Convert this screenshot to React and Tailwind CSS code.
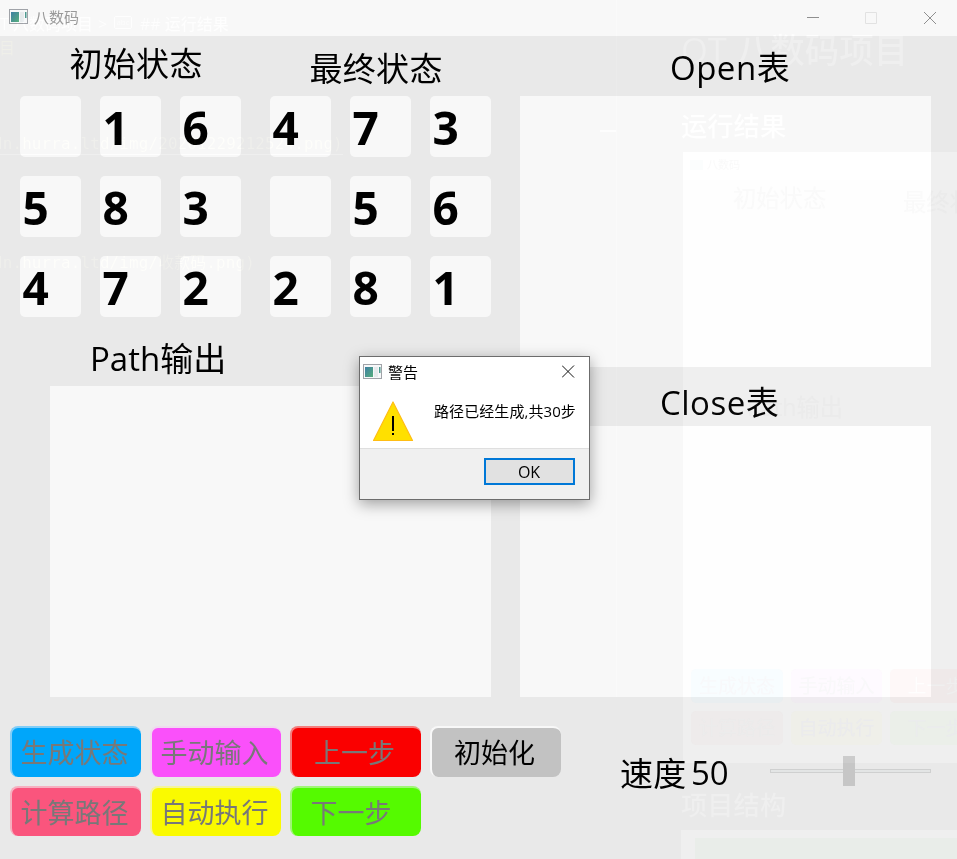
import React from "react";

const START = ["", "1", "6", "5", "8", "3", "4", "7", "2"];
const GOAL = ["4", "7", "3", "", "5", "6", "2", "8", "1"];

function AppIcon() {
  return (
    <svg className="block h-4 w-5 shrink-0" viewBox="0 0 20 16">
      <defs>
        <linearGradient id="screen" x1="0" y1="0" x2="1" y2="1">
          <stop offset="0" stopColor="#3e7fa3" />
          <stop offset="1" stopColor="#56ad7c" />
        </linearGradient>
      </defs>
      <rect x="0.5" y="0.5" width="18" height="14" fill="#f7f8f9" stroke="#a0a3a8" />
      <rect x="2" y="3" width="8" height="10" fill="url(#screen)" />
      <rect x="11" y="3" width="4" height="10" fill="#e6eaec" />
      <rect x="16" y="3" width="1.5" height="6" fill="#4f9a90" />
    </svg>
  );
}

function Board({ cells }) {
  return (
    <div className="grid w-[221px] grid-cols-3 gap-[19px]">
      {cells.map((n, i) => (
        <div key={i} className="flex h-[61px] items-center rounded-[5px] bg-[#f8f8f8] pt-[2px] pl-[2.5px] text-[46px] leading-[61px] font-bold">
          {n}
        </div>
      ))}
    </div>
  );
}

function Heading({ children, className }) {
  return <div className={"h-10 text-[33px] leading-10 whitespace-nowrap " + className}>{children}</div>;
}

function ActionButton({ children, className }) {
  return (
    <button className={"rounded-[8px] border-t-2 border-l-2 pr-1 text-[27px] leading-none whitespace-nowrap " + className}>
      {children}
    </button>
  );
}

function Ghost({ children, className }) {
  return <div className={"absolute whitespace-nowrap " + className}>{children}</div>;
}

/* Faint content of the window behind, showing through the translucent frame. */
function Backdrop() {
  return (
    <div className="pointer-events-none absolute inset-0 overflow-hidden text-[#060606] mix-blend-plus-lighter">
      <Ghost className="top-[12px] left-0 text-[16px] leading-6 font-medium">T 八数码项目</Ghost>
      <Ghost className="top-[12px] left-[98px] text-[16px] leading-6">&gt;</Ghost>
      <Ghost className="top-[16px] left-[114px] h-[13px] w-[18px] rounded-[2px] border border-[#060606] text-center text-[8px] leading-[10px]">abc</Ghost>
      <Ghost className="top-[12px] left-[140px] text-[16px] leading-6 font-medium">## 运行结果</Ghost>
      <Ghost className="top-[36px] left-[-1px] text-[16px] leading-6 text-[#060600]">目</Ghost>
      <Ghost className="top-[133px] left-[-7px] h-[22px] border-b border-[#060606] font-['DejaVu_Sans_Mono','Noto_Sans_CJK_SC',monospace] text-[15.9px] leading-[22px] tracking-[0.15px] text-[#060603]">dn.hurra.ltd/img/20201229212524.png)</Ghost>
      <Ghost className="top-[252px] left-[-7px] font-['DejaVu_Sans_Mono','Noto_Sans_CJK_SC',monospace] text-[15.9px] leading-[22px] tracking-[0.15px] text-[#060603]">dn.hurra.ltd/img/收款码.png)</Ghost>

      <div className="absolute top-0 left-[616px] h-[697px] w-px bg-[#020202]" />
      <div className="absolute top-[130px] left-[600px] h-[2px] w-4 bg-[#050505]" />
      <Ghost className="top-[28px] left-[681px] text-[34.5px] leading-[44px] font-medium">QT 八数码项目</Ghost>
      <Ghost className="top-[110px] left-[681px] text-[26.3px] leading-8 font-medium text-[#070707]">运行结果</Ghost>

      <div className="absolute top-[152px] left-[683px] h-[611px] w-[274px] overflow-hidden bg-[#060606] text-[#020202]">
        <div className="absolute top-0 left-0 h-7 w-full bg-[#070707]" />
        <div className="absolute top-2 left-[7px] h-[10px] w-[13px] bg-[#030505]" />
        <Ghost className="top-[5px] left-[24px] text-[11px] leading-4">八数码</Ghost>
        <Ghost className="top-[30px] left-[50px] text-[23.3px] leading-8">初始状态</Ghost>
        <Ghost className="top-[34px] left-[220px] text-[23.3px] leading-8">最终状态</Ghost>
        <Ghost className="top-[239px] left-[64px] text-[23.3px] leading-8">Path输出</Ghost>
        <div className="absolute top-[517px] left-2 grid grid-cols-[92px_91px_92px] gap-x-2 gap-y-2 text-center text-[19px] leading-[34px]">
          <div className="rounded-[5px] bg-[#000507] text-[#000103]">生成状态</div>
          <div className="rounded-[5px] bg-[#060207] text-[#010002]">手动输入</div>
          <div className="rounded-[5px] bg-[#060000] text-[#070606]">上一步</div>
          <div className="rounded-[5px] bg-[#050202] text-[#030303]">计算路径</div>
          <div className="rounded-[5px] bg-[#060600] text-[#020204]">自动执行</div>
          <div className="rounded-[5px] bg-[#020600] text-[#020304]">下一步</div>
        </div>
      </div>

      <Ghost className="top-[787px] left-[681px] text-[26.3px] leading-9 font-medium">项目结构</Ghost>
      <div className="absolute top-[830px] left-[681px] h-[29px] w-[276px] bg-[#060606] pt-2 pl-[14px]">
        <div className="h-[21px] bg-[#000400]" />
      </div>
    </div>
  );
}

function WarningDialog() {
  return (
    <div className="absolute top-[356px] left-[359px] flex h-[144px] w-[231px] flex-col border border-[#6c6c6c] bg-white text-[15px] shadow-[0_4px_14px_rgba(0,0,0,0.36)]">
      <div className="flex h-[29px] items-center pl-[3px]">
        <AppIcon />
        <span className="ml-[5px] text-[15px] leading-5">警告</span>
        <svg className="mr-[14px] ml-auto block h-[13px] w-[13px]" viewBox="0 0 13 13" stroke="#111" fill="none">
          <path d="M0 .5 12 12.5M12 .5 0 12.5" />
        </svg>
      </div>
      <div className="flex h-[63px] items-start border-b border-[#dfdfdf] pl-[13px]">
        <svg className="mt-[15px] block h-[41px] w-[41px] shrink-0" viewBox="0 0 41 41">
          <path d="M20 1 39.500 39.5H.5Z" fill="#ffe000" stroke="#ffbd14" strokeWidth="1.2" strokeLinejoin="round" />
          <path d="M20 15V30M20 32V34" stroke="#000" strokeWidth="2" />
        </svg>
        <span className="mt-[15px] ml-5 text-[15px] leading-5 tracking-[0.08px] whitespace-nowrap">路径已经生成,共30步</span>
      </div>
      <div className="flex flex-1 items-start justify-end bg-[#f0f0f0] pt-[9px] pr-[14px]">
        <button className="h-[27px] w-[91px] border-2 border-[#0078d7] bg-[#e1e1e1] pt-px pr-px text-[16px] leading-[22px]">OK</button>
      </div>
    </div>
  );
}

export default function App() {
  return (
    <div className="relative isolate h-[859px] w-[957px] overflow-hidden bg-[#e9e9e9] font-['Open_Sans','Noto_Sans_CJK_SC',sans-serif] text-black">
      <header className="flex h-9 items-center bg-[#f8f8f8] pb-[2px] pl-[9px]">
        <AppIcon />
        <span className="ml-[5px] text-[15px] leading-5 text-[#999]">八数码</span>
        <svg className="mr-5 ml-auto block h-[13px] w-[130px]" viewBox="0 0 130 13" fill="none" stroke="#8f8f8f">
          <path d="M0 6.500H12" />
          <path d="M58.5 1.500H69.5V12.500H58.5Z" stroke="#e2e2e2" />
          <path d="M117 1 129 13M129 1 117 13" />
        </svg>
      </header>

      <main className="flex h-[661px]">
        <section className="w-[520px]">
          <div className="flex h-[60px]">
            <Heading className="mt-2 ml-[69.5px] w-[240px] tracking-[0.3px]">初始状态</Heading>
            <Heading className="mt-[13px] tracking-[0.3px]">最终状态</Heading>
          </div>
          <div className="flex gap-[29px] pl-5">
            <Board cells={START} />
            <Board cells={GOAL} />
          </div>
          <div className="h-[69px] pt-[22px] pl-[90px]">
            <Heading className="">Path输出</Heading>
          </div>
          <div className="ml-[50px] h-[311px] w-[441px] bg-[#f8f8f8]" />
        </section>
        <section className="w-[411px]">
          <div className="h-[60px] pt-[12px] pl-[150px]">
            <Heading className="tracking-[0.5px]">Open表</Heading>
          </div>
          <div className="h-[271px] bg-[#f8f8f8]" />
          <div className="h-[59px] pt-[16px] pl-[140px]">
            <Heading className="tracking-[0.5px]">Close表</Heading>
          </div>
          <div className="h-[271px] bg-[#f8f8f8]" />
        </section>
      </main>

      <footer className="flex h-[162px] pt-[29px] pl-[10px]">
        <div className="grid h-[110px] w-[551px] grid-cols-[131px_131px_131px_131px] grid-rows-[51px_50px] gap-x-[9px] gap-y-[9px] text-[#787878]">
          <ActionButton className="border-[#7fcdf8] bg-[#00a6fa]">生成状态</ActionButton>
          <ActionButton className="border-[#f0d8f0] bg-[#fa50fa]">手动输入</ActionButton>
          <ActionButton className="border-[#f47c7c] bg-[#fa0000]">上一步</ActionButton>
          <ActionButton className="border-[#f8f8f8] bg-[#c2c2c2] text-black">初始化</ActionButton>
          <ActionButton className="border-[#f6b0c0] bg-[#fa557d]">计算路径</ActionButton>
          <ActionButton className="border-[#f4f49c] bg-[#fafa00]">自动执行</ActionButton>
          <ActionButton className="border-[#a0f577] bg-[#55fa00] pr-[11px]!">下一步</ActionButton>
        </div>
        <div className="flex items-start pt-[28px] pl-[59px]">
          <Heading className="w-[71px] tracking-[0.3px]">速度</Heading>
          <Heading className="-mt-px w-[79px]">50</Heading>
          <div className="mt-[2px] grid h-[30px] w-[161px] items-center">
            <div className="col-start-1 row-start-1 h-1 border border-[#cfd0d0] bg-[#e3e5e5]" />
            <div className="col-start-1 row-start-1 ml-[73px] h-[30px] w-3 bg-[#c6c6c6]" />
          </div>
        </div>
      </footer>

      <Backdrop />
      <WarningDialog />
    </div>
  );
}
